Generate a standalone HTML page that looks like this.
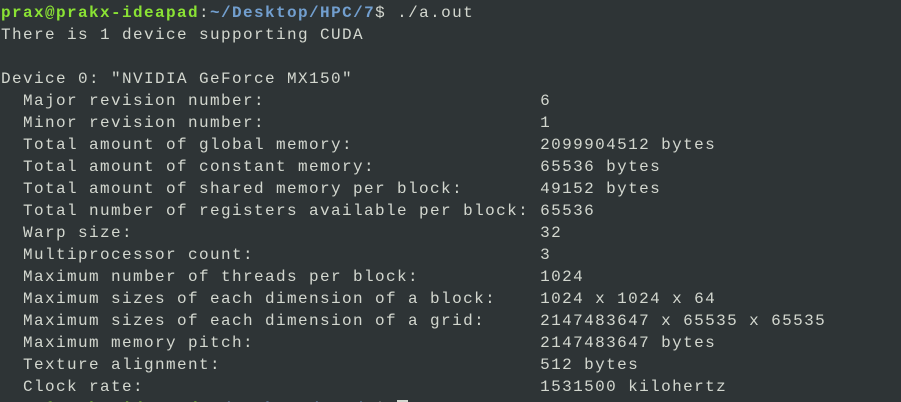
<!DOCTYPE html>
<html><head><meta charset="utf-8"><style>
html,body{margin:0;padding:0;background:#2e3436;width:901px;height:402px;overflow:hidden}
pre{margin:0;padding:2px 0 0 1px;font-family:"Liberation Mono","DejaVu Sans Mono",monospace;font-size:16px;letter-spacing:1.4px;line-height:22px;color:#d3d7cf}
.g{color:#8ae234;font-weight:bold}
.b{color:#729fcf;font-weight:bold}
.cur{background:#d3d7cf;color:#2e3436}
</style></head><body><pre><span class="g">prax@prakx-ideapad</span>:<span class="b">~/Desktop/HPC/7</span>$ ./a.out
There is 1 device supporting CUDA

Device 0: "NVIDIA GeForce MX150"
  Major revision number:                         6
  Minor revision number:                         1
  Total amount of global memory:                 2099904512 bytes
  Total amount of constant memory:               65536 bytes
  Total amount of shared memory per block:       49152 bytes
  Total number of registers available per block: 65536
  Warp size:                                     32
  Multiprocessor count:                          3
  Maximum number of threads per block:           1024
  Maximum sizes of each dimension of a block:    1024 x 1024 x 64
  Maximum sizes of each dimension of a grid:     2147483647 x 65535 x 65535
  Maximum memory pitch:                          2147483647 bytes
  Texture alignment:                             512 bytes
  Clock rate:                                    1531500 kilohertz
<span class="g">prax@prakx-ideapad</span>:<span class="b">~/Desktop/HPC/7</span>$ <span class="cur"> </span></pre></body></html>
